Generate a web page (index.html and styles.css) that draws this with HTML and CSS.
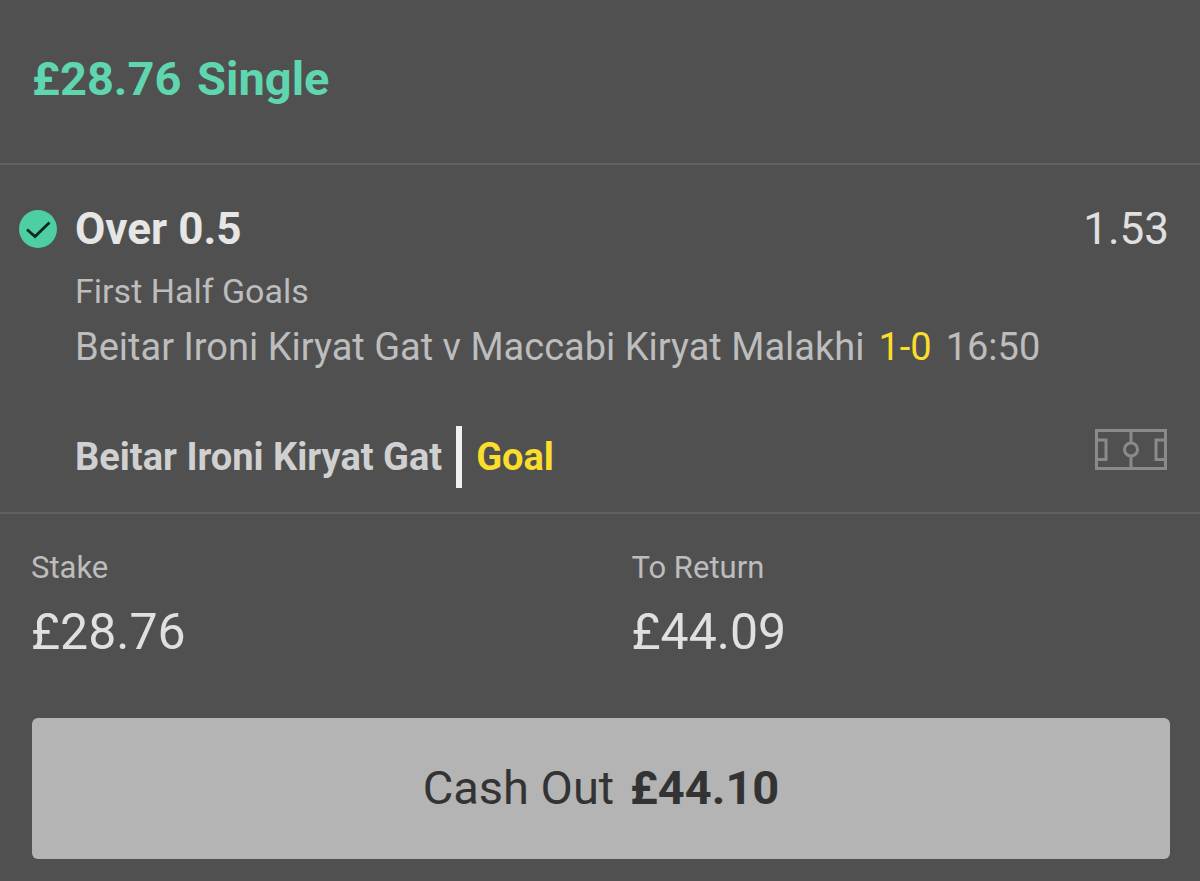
FILE: index.html
```
<!DOCTYPE html>
<html lang="en">
<head>
<meta charset="utf-8">
<meta name="viewport" content="width=device-width, initial-scale=1">
<title>£28.76 Single</title>
<link rel="stylesheet" href="styles.css">
</head>
<body>
<main class="bet">
  <header class="bet-header">
    <h1 class="bet-title">£28.76 <span class="bet-type">Single</span></h1>
  </header>
  <section class="selection">
    <svg class="tick" viewBox="0 0 38 38" aria-hidden="true"><circle cx="19" cy="19" r="19" fill="#4dcea3"/><path d="M8 19.500 16 26.500 30.500 12.500" fill="none" stroke="#0c2a20" stroke-width="2.800"/></svg>
    <div class="details">
      <div class="pick-row">
        <h2 class="pick">Over 0.5</h2>
        <span class="odds">1.53</span>
      </div>
      <p class="market">First Half Goals</p>
      <p class="fixture"><span>Beitar Ironi Kiryat Gat v Maccabi Kiryat Malakhi</span><span class="score">1-0</span><span>16:50</span></p>
      <div class="event-row">
        <span class="team">Beitar Ironi Kiryat Gat</span>
        <span class="event">Goal</span>
        <svg class="pitch" viewBox="0 0 72 41" fill="none" stroke="#8a8a8a" stroke-width="3" aria-hidden="true"><path d="M1.500 1.500H70.500V39.500H1.500ZM1.500 11H11V30.500H1.500M70.500 11H61V30.500H70.500M36 1.500V14M36 27V39.500"/><circle cx="36" cy="20.500" r="6.500"/></svg>
      </div>
    </div>
  </section>
  <section class="totals">
    <div><p class="label">Stake</p><p class="amount">£28.76</p></div>
    <div><p class="label">To Return</p><p class="amount">£44.09</p></div>
  </section>
  <button class="cash-out" type="button">Cash Out <strong class="cash-value">£44.10</strong></button>
</main>
</body>
</html>
```
FILE: styles.css
```
* { box-sizing: border-box; margin: 0; }
body { background: #505050; color: #e0e0e0; font-family: Roboto, "Liberation Sans", sans-serif; }
.bet { padding-bottom: 22px; }
.bet-header { padding: 49px 32px 54px; border-bottom: 2px solid #606060; }
.bet-title { color: #5fd6b0; font-size: 47px; font-weight: 700; line-height: 60px; }
.bet-type { margin-left: 4px; }
.selection { display: flex; gap: 18px; padding: 36px 31px 24px 19px; border-bottom: 2px solid #606060; }
.tick { flex: none; width: 38px; height: 38px; margin-top: 9px; }
.details { flex: 1; min-width: 0; }
.pick-row { display: flex; justify-content: space-between; line-height: 56px; }
.pick { font-size: 44px; font-weight: 700; color: #e6e6e6; }
.odds { font-size: 44px; }
.market { margin-top: 12px; color: #bdbdbd; font-size: 34px; line-height: 44px; }
.fixture { display: flex; flex-wrap: wrap; gap: 0 14px; margin-top: 10px; color: #bdbdbd; font-size: 38px; line-height: 48px; }
.score { color: #fbdd2b; }
.event-row { display: flex; align-items: center; margin-top: 55px; font-size: 38px; font-weight: 700; line-height: 62px; }
.team { padding-right: 14px; border-right: 6px solid #f0f0f0; color: #d0d0d0; }
.event { margin-left: 14px; color: #fbdd2b; }
.pitch { width: 72px; height: 41px; margin: 0 2px 16px auto; }
.totals { display: grid; grid-template-columns: 1fr 1fr; padding: 32px 0 0 31px; column-gap: 32px; }
.label { color: #bdbdbd; font-size: 31px; line-height: 44px; }
.amount { margin-top: 12px; font-size: 50px; line-height: 60px; }
.cash-out { display: block; width: calc(100% - 62px); margin: 56px 30px 0 32px; padding: 40px 16px 41px; border: 0; border-radius: 6px; background: #b4b4b4; color: #333; font: 400 47px/60px Roboto, "Liberation Sans", sans-serif; }
.cash-value { margin-left: 4px; font-weight: 700; }
```
